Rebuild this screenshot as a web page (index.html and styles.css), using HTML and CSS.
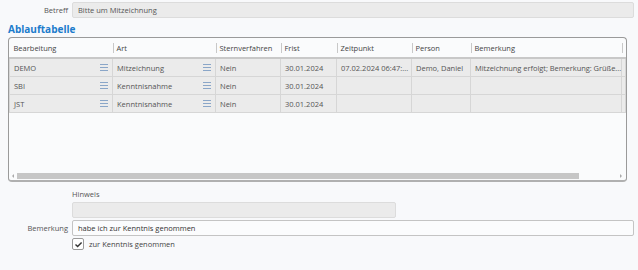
FILE: index.html
```html
<!DOCTYPE html>
<html lang="de">
<head>
  <meta charset="UTF-8" />
  <title>Ablauftabelle</title>
  <link rel="stylesheet" href="styles.css">
</head>
<body>
  <div class="form-row top-row">
    <label class="field-label">Betreff</label>
    <div class="field readonly">Bitte um Mitzeichnung</div>
  </div>

  <div class="section-title">Ablauftabelle</div>

  <div class="grid-box">
    <table class="grid">
      <colgroup>
        <col style="width:103px"><col style="width:103px"><col style="width:65px"><col style="width:56px">
        <col style="width:75px"><col style="width:59px"><col style="width:151px"><col>
      </colgroup>
      <thead>
        <tr>
          <th>Bearbeitung</th><th>Art</th><th>Sternverfahren</th><th>Frist</th>
          <th>Zeitpunkt</th><th>Person</th><th>Bemerkung</th><th></th>
        </tr>
      </thead>
      <tbody>
        <tr>
          <td><span class="cell-menu">DEMO<span class="burger"></span></span></td>
          <td><span class="cell-menu">Mitzeichnung<span class="burger"></span></span></td>
          <td>Nein</td><td>30.01.2024</td><td>07.02.2024 06:47:...</td><td>Demo, Daniel</td>
          <td class="remark">Mitzeichnung erfolgt; Bemerkung: Grüße...</td><td></td>
        </tr>
        <tr>
          <td><span class="cell-menu">SBI<span class="burger"></span></span></td>
          <td><span class="cell-menu">Kenntnisnahme<span class="burger"></span></span></td>
          <td>Nein</td><td>30.01.2024</td><td></td><td></td><td></td><td></td>
        </tr>
        <tr>
          <td><span class="cell-menu">JST<span class="burger"></span></span></td>
          <td><span class="cell-menu">Kenntnisnahme<span class="burger"></span></span></td>
          <td>Nein</td><td>30.01.2024</td><td></td><td></td><td></td><td></td>
        </tr>
      </tbody>
    </table>
    <div class="hscroll">
      <span class="arrow left"></span>
      <div class="thumb"></div>
      <span class="arrow right"></span>
    </div>
  </div>

  <div class="form-row hint-row">
    <div class="field-label"></div>
    <div class="stack">
      <label class="top-label">Hinweis</label>
      <div class="field readonly short"></div>
    </div>
  </div>

  <div class="form-row">
    <label class="field-label">Bemerkung</label>
    <div class="field">habe ich zur Kenntnis genommen</div>
  </div>

  <div class="form-row check-row">
    <div class="field-label"></div>
    <label class="check">
      <span class="box">
        <svg width="9" height="9" viewBox="0 0 9 9"><path d="M1.5 4.6 L3.6 6.6 L7.6 2.4" fill="none" stroke="#333" stroke-width="1.4"/></svg>
      </span>
      zur Kenntnis genommen
    </label>
  </div>
</body>
</html>
```

FILE: styles.css
```css
body {
  margin: 0;
  padding: 2px 4px 0 8px;
  background: #f8f9fb;
  font-family: 'Open Sans', sans-serif;
  font-size: 7.5px;
  color: #444;
}

.form-row {
  display: flex;
  align-items: center;
  gap: 4px;
}

.field-label {
  width: 60px;
  flex-shrink: 0;
  text-align: right;
  color: #555;
}

.field {
  flex: 1;
  height: 14px;
  line-height: 14px;
  padding: 0 5px;
  border: 1px solid #c4c4c4;
  border-radius: 2px;
  background: #fbfcfd;
  color: #333;
}

.field.readonly {
  background: #ebebeb;
  border-color: #dcdcdc;
  color: #555;
}

.field.short {
  flex: none;
  width: 312px;
}

.section-title {
  margin-top: 5px;
  font-size: 10px;
  font-weight: bold;
  color: #1c7ccc;
  line-height: 13px;
}

.grid-box {
  margin-top: 1px;
  width: 617px;
  height: 142px;
  border: 1px solid #9a9a9a;
  border-bottom: 2px solid #b0b0b0;
  border-radius: 4px;
  background: #fafbfc;
  position: relative;
  overflow: hidden;
}

.grid {
  border-collapse: collapse;
  table-layout: fixed;
  width: 617px;
}

.grid th {
  height: 19px;
  padding: 0 4px;
  text-align: left;
  font-weight: normal;
  color: #444;
  border-bottom: 2px solid #c8c8c8;
  position: relative;
  white-space: nowrap;
}

.grid th + th::before {
  content: "";
  position: absolute;
  left: 0;
  top: 5px;
  height: 10px;
  border-left: 1px solid #c8c8c8;
}

.grid td {
  height: 17px;
  padding: 0 4px;
  background: #ebebeb;
  border: 1px solid #d6d6d6;
  border-top-color: #f6f6f6;
  white-space: nowrap;
  color: #555;
}

.grid td.remark {
  padding: 0 2px 0 4px;
  letter-spacing: -0.05px;
}

.cell-menu {
  display: flex;
  justify-content: space-between;
  align-items: center;
}

.burger {
  width: 8px;
  height: 5px;
  border-top: 1px solid #8aa6c8;
  border-bottom: 1px solid #8aa6c8;
  position: relative;
}

.burger::after {
  content: "";
  position: absolute;
  left: 0;
  right: 0;
  top: 2px;
  border-top: 1px solid #8aa6c8;
}

.hscroll {
  position: absolute;
  left: 0;
  right: 0;
  bottom: 1px;
  height: 7px;
  display: flex;
  align-items: center;
}

.hscroll .thumb {
  margin-left: 8px;
  width: 562px;
  height: 6px;
  background: #c6c6c6;
}

.arrow {
  position: absolute;
  top: 2px;
  width: 0;
  height: 0;
  border-top: 2px solid transparent;
  border-bottom: 2px solid transparent;
}

.arrow.left {
  left: 3px;
  border-right: 2px solid #aaa;
}

.arrow.right {
  right: 4px;
  border-left: 2px solid #aaa;
}

.hint-row {
  margin-top: 7px;
  align-items: flex-start;
}

.stack {
  display: flex;
  flex-direction: column;
  gap: 3px;
}

.top-label {
  color: #555;
}

.hint-row + .form-row {
  margin-top: 2px;
}

.check-row {
  margin-top: 2px;
}

.check {
  display: flex;
  align-items: center;
  gap: 5px;
  color: #444;
}

.box {
  width: 10px;
  height: 10px;
  border: 1px solid #9a9a9a;
  border-radius: 2px;
  background: #fff;
  display: flex;
  align-items: center;
  justify-content: center;
}
```
